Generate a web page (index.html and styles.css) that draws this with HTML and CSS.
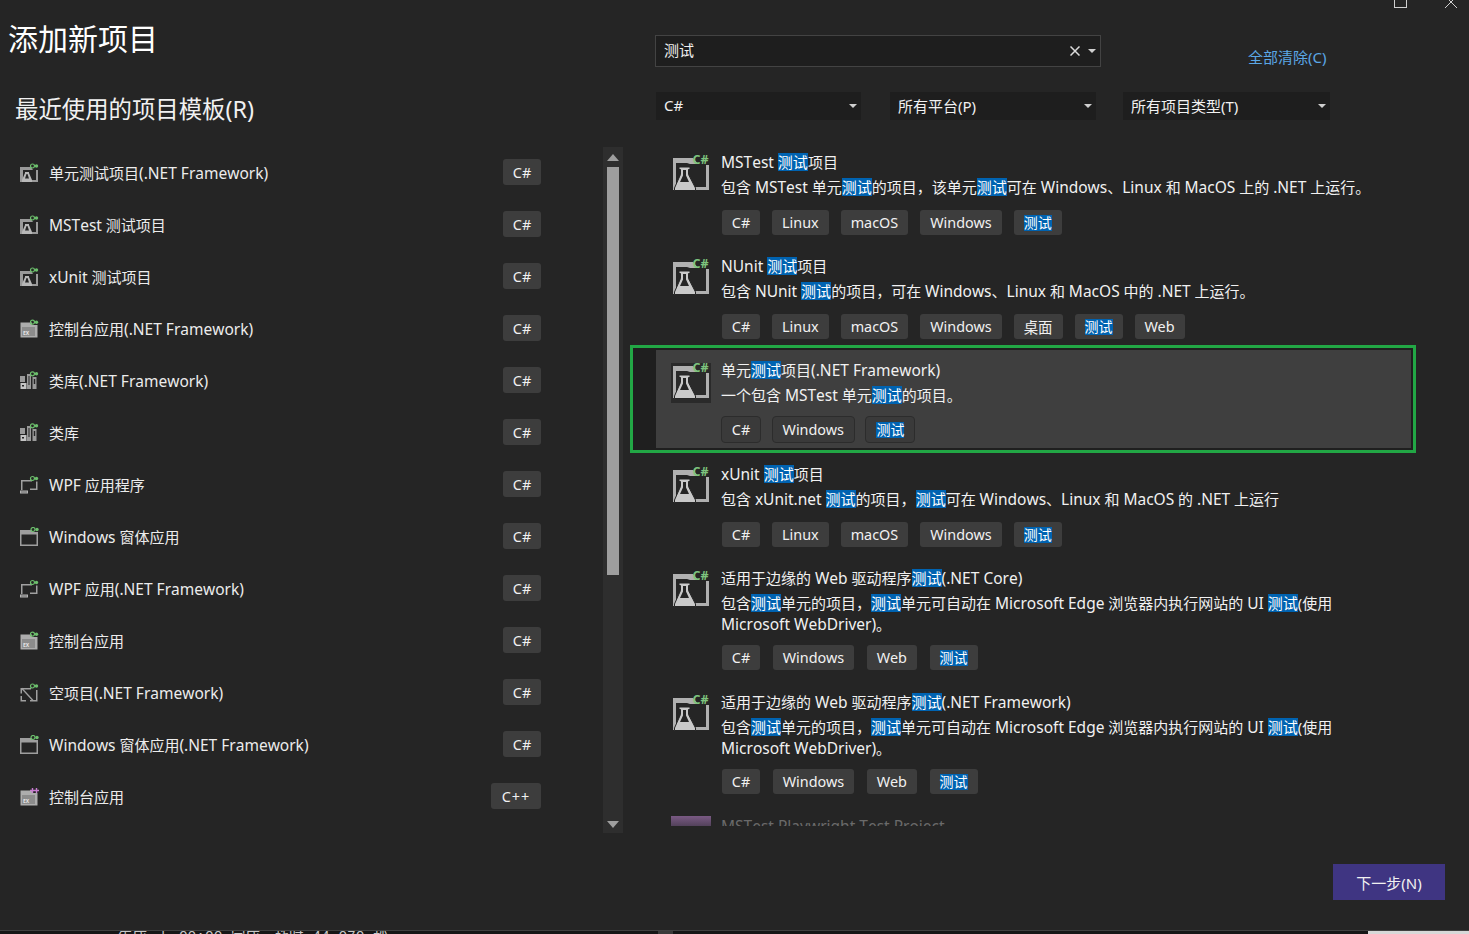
FILE: index.html
```html
<!DOCTYPE html>
<html lang="zh-CN">
<head>
<meta charset="utf-8">
<title>添加新项目</title>
<link rel="stylesheet" href="styles.css">
</head>
<body>
<svg class="defs" width="0" height="0" aria-hidden="true">
  <defs>
    <symbol id="i-test" viewBox="0 0 40 40">
      <path d="M2 3h20l5 6h-8l-3-1H5v27H2z" fill="#b0b0b0"/>
      <path d="M35 10h3v25H19v-3h16z" fill="#b0b0b0"/>
      <path d="M8 12h11v2.500h-1.500v5L24.500 33v2.500H3.500V33L9.500 19.500v-5H8z" fill="#c9c9c9" stroke="#252525" stroke-width="1"/>
      <path d="M12 15h3v5.500l3 6.500H9l3-6.500z" fill="#252525"/>
      <text x="21.500" y="8.500" class="cs-big">C#</text>
    </symbol>
    <symbol id="i-test-s" viewBox="0 0 20 20">
      <path d="M1 4h11l2 3H4v12H1z" fill="#9a9a9a"/>
      <path d="M17 7h2v12h-8v-2h6z" fill="#9a9a9a"/>
      <path d="M6 9h4v1l3 7v2H3v-2l3-7z" fill="#b8b8b8"/>
      <path d="M7.500 11h1l1.500 4.500H6z" fill="#252525"/>
      <circle cx="13.500" cy="3" r="2" fill="none" stroke="#6cbf6c" stroke-width="1.200"/>
      <circle cx="17.500" cy="3" r="1.700" fill="#6cbf6c"/>
    </symbol>
    <symbol id="i-lib" viewBox="0 0 20 20">
      <path d="M1 5h5v6H1zM8 3h4v15H8zM13.500 6h4v12h-4z" fill="#9a9a9a"/>
      <path d="M1.500 12h6v6h-6z" fill="#c4c4c4"/>
      <path d="M3 14h2v1.500H3zM9.500 5h1v9h-1zM14.800 8h1.400v5h-1.400z" fill="#252525"/>
      <circle cx="13.500" cy="2.800" r="2" fill="none" stroke="#6cbf6c" stroke-width="1.200"/>
      <circle cx="17.500" cy="2.800" r="1.700" fill="#6cbf6c"/>
    </symbol>
    <symbol id="i-wpf" viewBox="0 0 20 20">
      <path d="M2 5h11v1.500H3.500V15H2zM17 6.500h1.500V15H11v-1.500h6z" fill="#a0a0a0"/>
      <path d="M1 15.500h8v3H1z" fill="#b4b4b4"/>
      <path d="M2.500 16.500h1v1h-1zM4.500 16.500h1v1h-1zM6.500 16.500h1v1h-1z" fill="#252525"/>
      <circle cx="13.500" cy="3.500" r="2" fill="none" stroke="#6cbf6c" stroke-width="1.200"/>
      <circle cx="17.500" cy="3.500" r="1.700" fill="#6cbf6c"/>
    </symbol>
    <symbol id="i-win" viewBox="0 0 20 20">
      <path d="M1 3h12v2H19v14H1zM2.500 7.500v10h15v-10z" fill="#9e9e9e"/>
      <circle cx="14" cy="2.500" r="2" fill="none" stroke="#6cbf6c" stroke-width="1.200"/>
      <circle cx="18" cy="2.500" r="1.700" fill="#6cbf6c"/>
    </symbol>
    <symbol id="i-con" viewBox="0 0 20 20">
      <path d="M1.500 3.500H13V6h5.500v12.500h-17z" fill="#adadad"/>
      <path d="M3 8h13v9H3z" fill="#8c8c8c"/>
      <text x="4" y="15.500" class="cs-mini">EX</text>
      <circle cx="13.500" cy="3.200" r="2" fill="none" stroke="#6cbf6c" stroke-width="1.200"/>
      <circle cx="17.500" cy="3.200" r="1.700" fill="#6cbf6c"/>
    </symbol>
    <symbol id="i-cpp" viewBox="0 0 20 20">
      <path d="M1.500 3.500H13V6h5.500v12.500h-17z" fill="#adadad"/>
      <path d="M3 8h13v9H3z" fill="#8c8c8c"/>
      <text x="4" y="15.500" class="cs-mini">EX</text>
      <path d="M11 3.500h5M13.500 1v5M15 3.500h5M17.500 1v5" stroke="#c77dd0" stroke-width="1.400" fill="none"/>
    </symbol>
    <symbol id="i-empty" viewBox="0 0 20 20">
      <path d="M1.500 5H12v1.500H3v4H1.500zM1.500 13H3v4h4v1.500H1.500zM11 17h6V7h1.500v11.500H11z" fill="#a0a0a0"/>
      <path d="M2 5.500l1.200-.8 11.500 12.500-1.200.8z" fill="#a0a0a0"/>
      <circle cx="13.500" cy="3" r="2" fill="none" stroke="#6cbf6c" stroke-width="1.200"/>
      <circle cx="17.500" cy="3" r="1.700" fill="#6cbf6c"/>
    </symbol>
  </defs>
</svg>

<div class="app">
  <div class="winctl">
    <span class="max"></span>
    <svg class="close" width="14" height="9" viewBox="0 0 14 9"><path d="M1-4l12 12M13-4L1 8" stroke="#d0d0d0" stroke-width="1" fill="none"/></svg>
  </div>

  <main class="body">
    <section class="left">
      <h1 class="title">添加新项目</h1>
      <h2 class="subtitle">最近使用的项目模板(R)</h2>
      <div class="recent">
        <ul class="recent-list">
          <li class="recent-row"><svg class="ricon"><use href="#i-test-s"/></svg><span class="rname">单元测试项目<span class="en">(.NET Framework)</span></span><span class="tag">C#</span></li>
          <li class="recent-row"><svg class="ricon"><use href="#i-test-s"/></svg><span class="rname"><span class="en">MSTest</span> 测试项目</span><span class="tag">C#</span></li>
          <li class="recent-row"><svg class="ricon"><use href="#i-test-s"/></svg><span class="rname"><span class="en">xUnit</span> 测试项目</span><span class="tag">C#</span></li>
          <li class="recent-row"><svg class="ricon"><use href="#i-con"/></svg><span class="rname">控制台应用<span class="en">(.NET Framework)</span></span><span class="tag">C#</span></li>
          <li class="recent-row"><svg class="ricon"><use href="#i-lib"/></svg><span class="rname">类库<span class="en">(.NET Framework)</span></span><span class="tag">C#</span></li>
          <li class="recent-row"><svg class="ricon"><use href="#i-lib"/></svg><span class="rname">类库</span><span class="tag">C#</span></li>
          <li class="recent-row"><svg class="ricon"><use href="#i-wpf"/></svg><span class="rname"><span class="en">WPF</span> 应用程序</span><span class="tag">C#</span></li>
          <li class="recent-row"><svg class="ricon"><use href="#i-win"/></svg><span class="rname"><span class="en">Windows</span> 窗体应用</span><span class="tag">C#</span></li>
          <li class="recent-row"><svg class="ricon"><use href="#i-wpf"/></svg><span class="rname"><span class="en">WPF</span> 应用<span class="en">(.NET Framework)</span></span><span class="tag">C#</span></li>
          <li class="recent-row"><svg class="ricon"><use href="#i-con"/></svg><span class="rname">控制台应用</span><span class="tag">C#</span></li>
          <li class="recent-row"><svg class="ricon"><use href="#i-empty"/></svg><span class="rname">空项目<span class="en">(.NET Framework)</span></span><span class="tag">C#</span></li>
          <li class="recent-row"><svg class="ricon"><use href="#i-win"/></svg><span class="rname"><span class="en">Windows</span> 窗体应用<span class="en">(.NET Framework)</span></span><span class="tag">C#</span></li>
          <li class="recent-row"><svg class="ricon"><use href="#i-cpp"/></svg><span class="rname">控制台应用</span><span class="tag tag-cpp">C++</span></li>
        </ul>
        <div class="scrollbar">
          <span class="arrow-up"></span>
          <span class="thumb"></span>
          <span class="arrow-down"></span>
        </div>
      </div>
    </section>

    <section class="right">
      <div class="search-row">
        <div class="search"><span class="search-text">测试</span><svg class="search-x" width="10" height="10" viewBox="0 0 10 10"><path d="M.5.5l9 9M9.500.5l-9 9" stroke="#dcdcdc" stroke-width="1.500" fill="none"/></svg><span class="caret"></span></div>
        <a class="clear">全部清除(C)</a>
      </div>
      <div class="filters">
        <div class="filter f-lang"><span class="ftext">C#</span><span class="caret"></span></div>
        <div class="filter f-plat"><span class="ftext">所有平台(P)</span><span class="caret"></span></div>
        <div class="filter f-type"><span class="ftext">所有项目类型(T)</span><span class="caret"></span></div>
      </div>

      <div class="results">
        <article class="item">
          <svg class="picon"><use href="#i-test"/></svg>
          <div class="info">
            <div class="iname"><span class="en">MSTest</span> <mark>测试</mark>项目</div>
            <p class="desc">包含 <span class="en">MSTest</span> 单元<mark>测试</mark>的项目，该单元<mark>测试</mark>可在 <span class="en">Windows</span>、<span class="en">Linux</span> 和 <span class="en">MacOS</span> 上的 <span class="en">.NET</span> 上运行。</p>
            <div class="tags"><span class="tag">C#</span><span class="tag">Linux</span><span class="tag">macOS</span><span class="tag">Windows</span><span class="tag"><mark>测试</mark></span></div>
          </div>
        </article>
        <article class="item">
          <svg class="picon"><use href="#i-test"/></svg>
          <div class="info">
            <div class="iname"><span class="en">NUnit</span> <mark>测试</mark>项目</div>
            <p class="desc">包含 <span class="en">NUnit</span> <mark>测试</mark>的项目，可在 <span class="en">Windows</span>、<span class="en">Linux</span> 和 <span class="en">MacOS</span> 中的 <span class="en">.NET</span> 上运行。</p>
            <div class="tags"><span class="tag">C#</span><span class="tag">Linux</span><span class="tag">macOS</span><span class="tag">Windows</span><span class="tag">桌面</span><span class="tag"><mark>测试</mark></span><span class="tag">Web</span></div>
          </div>
        </article>
        <article class="item selected">
          <svg class="picon"><use href="#i-test"/></svg>
          <div class="info">
            <div class="iname">单元<mark>测试</mark>项目<span class="en">(.NET Framework)</span></div>
            <p class="desc">一个包含 <span class="en">MSTest</span> 单元<mark>测试</mark>的项目。</p>
            <div class="tags"><span class="tag">C#</span><span class="tag">Windows</span><span class="tag"><mark>测试</mark></span></div>
          </div>
        </article>
        <article class="item">
          <svg class="picon"><use href="#i-test"/></svg>
          <div class="info">
            <div class="iname"><span class="en">xUnit</span> <mark>测试</mark>项目</div>
            <p class="desc">包含 <span class="en">xUnit.net</span> <mark>测试</mark>的项目，<mark>测试</mark>可在 <span class="en">Windows</span>、<span class="en">Linux</span> 和 <span class="en">MacOS</span> 的 <span class="en">.NET</span> 上运行</p>
            <div class="tags"><span class="tag">C#</span><span class="tag">Linux</span><span class="tag">macOS</span><span class="tag">Windows</span><span class="tag"><mark>测试</mark></span></div>
          </div>
        </article>
        <article class="item long">
          <svg class="picon"><use href="#i-test"/></svg>
          <div class="info">
            <div class="iname">适用于边缘的 <span class="en">Web</span> 驱动程序<mark>测试</mark><span class="en">(.NET Core)</span></div>
            <p class="desc">包含<mark>测试</mark>单元的项目，<mark>测试</mark>单元可自动在 <span class="en">Microsoft Edge</span> 浏览器内执行网站的 <span class="en">UI</span> <mark>测试</mark>(使用 <span class="en">Microsoft WebDriver)</span>。</p>
            <div class="tags"><span class="tag">C#</span><span class="tag">Windows</span><span class="tag">Web</span><span class="tag"><mark>测试</mark></span></div>
          </div>
        </article>
        <article class="item long">
          <svg class="picon"><use href="#i-test"/></svg>
          <div class="info">
            <div class="iname">适用于边缘的 <span class="en">Web</span> 驱动程序<mark>测试</mark><span class="en">(.NET Framework)</span></div>
            <p class="desc">包含<mark>测试</mark>单元的项目，<mark>测试</mark>单元可自动在 <span class="en">Microsoft Edge</span> 浏览器内执行网站的 <span class="en">UI</span> <mark>测试</mark>(使用 <span class="en">Microsoft WebDriver)</span>。</p>
            <div class="tags"><span class="tag">C#</span><span class="tag">Windows</span><span class="tag">Web</span><span class="tag"><mark>测试</mark></span></div>
          </div>
        </article>
        <article class="item faded">
          <span class="pw-icon"></span>
          <div class="info"><div class="iname"><span class="en">MSTest Playwright Test Project</span></div></div>
        </article>
      </div>

      <div class="footer"><button class="next">下一步(N)</button></div>
    </section>
  </main>

  <footer class="statusbar">
    <span class="status-text">生成 于 00:00 完成，耗时 44.070 秒</span>
    <span class="status-mark"></span>
    <span class="status-light"></span>
  </footer>
</div>
</body>
</html>
```

FILE: styles.css
```css
* { box-sizing: border-box; }
html, body { margin: 0; padding: 0; height: 100%; overflow: hidden; }
body {
  background: #252525;
  color: #f1f1f1;
  font-family: "Noto Sans", "Noto Sans CJK SC", sans-serif;
  font-size: 15px;
}
.defs { position: absolute; }
.en { font-size: 15.500px; font-kerning: none; }
.cs-big { font: 700 12.500px "Noto Sans", sans-serif; fill: #7ec47e; letter-spacing: 0; }
.cs-mini { font: 700 5px "Noto Sans", sans-serif; fill: #e6e6e6; }

.app { position: relative; width: 1469px; height: 934px; display: flex; flex-direction: column; }

.winctl { position: absolute; top: 0; right: 11px; display: flex; gap: 37px; align-items: flex-start; }
.max { display: block; width: 13px; height: 8px; border: 1px solid #d0d0d0; border-top: 0; }
.close { display: block; }

.body { flex: 1; min-height: 0; display: flex; }

.left { width: 630px; flex: none; padding-top: 18px; }
.title { margin: 0 0 0 8px; font-size: 30px; font-weight: 400; line-height: 42px; color: #fff; }
.subtitle { margin: 32px 0 0 15px; font-size: 23.400px; font-weight: 400; line-height: 34px; color: #f1f1f1; }
.recent { display: flex; margin-top: 21px; height: 686px; align-items: flex-start; }
.recent-list { list-style: none; margin: 0; padding: 0; width: 603px; }
.recent-row { height: 52px; display: flex; align-items: center; padding: 0 62px 0 19px; }
.ricon { width: 20px; height: 20px; flex: none; margin-right: 10px; }
.rname { flex: 1; white-space: nowrap; font-size: 15px; line-height: 22px; height: 22px; color: #ececec; }

.tag {
  display: inline-flex; align-items: center; justify-content: center;
  height: 25px; padding: 0 10px; border-radius: 3px;
  background: #3d3d3d; color: #f1f1f1; font-size: 14.400px; white-space: nowrap;
}
.tags .tag:first-child { width: 38px; padding: 0; }
.recent-row .tag { height: 26px; width: 38px; padding: 0; margin-top: -2px; }
.recent-row .tag-cpp { width: 50px; letter-spacing: 1px; }

.scrollbar {
  width: 20px; height: 686px; background: #2e2e2e;
  display: flex; flex-direction: column; align-items: center;
}
.arrow-up { margin-top: 7px; width: 0; height: 0; border: 6px solid transparent; border-top: 0; border-bottom: 7px solid #9e9e9e; }
.thumb { margin-top: 6px; width: 12px; height: 408px; background: #9e9e9e; }
.arrow-down { margin-top: auto; margin-bottom: 5px; width: 0; height: 0; border: 6px solid transparent; border-bottom: 0; border-top: 7px solid #9e9e9e; }

.right { flex: 1; min-width: 0; display: flex; flex-direction: column; }
.search-row { display: flex; align-items: flex-start; margin-top: 35px; margin-left: 25px; }
.search {
  width: 446px; height: 32px; background: #1e1e1e; border: 1px solid #434343;
  display: flex; align-items: center; padding: 0 4px 0 8px;
}
.search-text { flex: 1; font-size: 15px; padding-bottom: 3px; }
.search-x { margin-right: 8px; }
.clear { margin: 12px 0 0 147px; color: #5ba7e6; font-size: 15px; line-height: 20px; }
.caret { width: 0; height: 0; border: 4px solid transparent; border-top: 4px solid #d0d0d0; border-bottom: 0; }

.filters { display: flex; margin: 25px 0 0 26px; }
.filter {
  height: 28px; background: #1e1e1e; display: flex; align-items: center; justify-content: space-between;
  padding: 0 4px 0 8px; font-size: 15px;
}
.ftext { padding-bottom: 2px; }
.f-lang { width: 205px; margin-right: 29px; }
.f-plat { width: 206px; margin-right: 27px; }
.f-type { width: 207px; }

.results { margin-top: 22px; height: 684px; width: 786px; overflow: hidden; flex: none; }
.item { display: flex; margin-left: 26px; height: 104px; padding: 8px 0 0 15px; }
.long { height: 124px; }
.selected {
  margin: -5px 0 1px; padding: 10px 0 0 38px; height: 108px;
  border: 3px solid #22a745;
  background: linear-gradient(#3f3f3f, #3f3f3f) 23px 2px / calc(100% - 25px) calc(100% - 4px) no-repeat, #1f1f1f;
}
.selected .tag { background: #3a3a3a; border: 1px solid #2c2c2c; border-radius: 4px; height: 27px; margin-top: -2px; }
.selected .tags .tag:first-child { width: 40px; }
.picon { width: 40px; height: 40px; flex: none; margin: 5px 10px 0 0; }
.selected .picon { background: #2a2a2a; }
.info { width: 640px; }
.iname { font-size: 15px; line-height: 25px; white-space: nowrap; color: #f1f1f1; }
.desc { margin: 0; font-size: 15px; line-height: 20px; padding-top: 2px; color: #f1f1f1; width: 665px; }
.long .desc { line-height: 21px; }
.tags { display: flex; gap: 12px; margin: 13px 0 0 1px; }
.long .tags { margin-top: 10px; gap: 12.700px; }
.selected .tags { margin-left: 0; gap: 10.500px; }
mark { display: inline-block; line-height: 18px; background: #0063b1; color: #fff; }
.tag mark { font-size: 14px; line-height: 16px; }

.faded .iname { color: #6a6a6a; }
.pw-icon { display: block; flex: none; width: 40px; height: 10px; margin: 2px 10px 0 0; background: linear-gradient(#7a5a84, #53425b); }

.footer { margin-top: 38px; padding-right: 24px; display: flex; justify-content: flex-end; }
.next {
  width: 112px; height: 36px; border: 0; background: #3f3582; color: #f1f1f1;
  font: 15px "Noto Sans", "Noto Sans CJK SC", sans-serif;
}

.statusbar {
  position: absolute; left: 0; right: 0; bottom: 0; height: 4px; overflow: hidden;
  background: #161616; border-top: 1px solid #404040;
}
.status-text { position: absolute; left: 118px; top: -3px; font: 14.500px/18px "Liberation Mono", "Noto Sans CJK SC", monospace; color: #c8c8c8; white-space: nowrap; }
.status-mark { position: absolute; left: 658px; top: 0; width: 15px; height: 3px; background: #3a3a3a; }
.status-light { position: absolute; right: 0; top: 0; width: 101px; height: 3px; background: #d8d8d8; }
```
